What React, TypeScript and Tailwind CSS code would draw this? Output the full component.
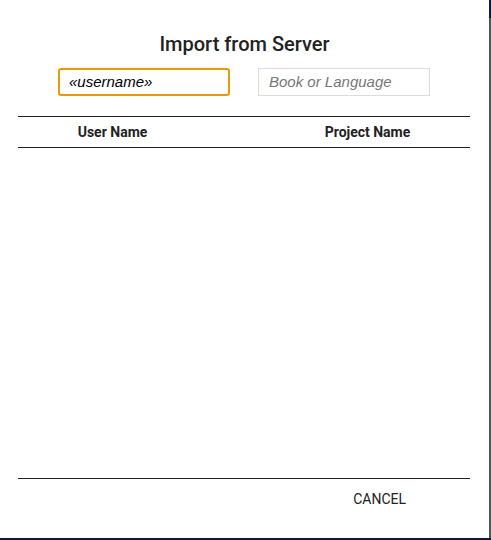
import React from "react";

export default function App() {
  return (
    <div className="w-[491px] h-[540px] bg-[#0d1b3a] flex flex-col" style={{ fontFamily: "Roboto, 'Noto Sans', sans-serif" }}>
      <div className="flex h-[538px]">
        <div className="w-[489px] h-[538px] bg-white flex flex-col">
          <h1 className="pt-[32px] text-center text-[20px] leading-[24px] font-medium text-[#222]">Import from Server</h1>
          <div className="mt-[12px] pl-[58px] flex gap-[28px]">
            <div className="w-[172px] h-[28px] rounded-[3px] border-2 border-[#e59a0c] flex items-center pl-[9px]">
              <span className="italic text-[15px] text-black" style={{ fontFamily: "'Liberation Sans', Arial, sans-serif" }}>«username»</span>
            </div>
            <div className="w-[172px] h-[28px] border border-[#dcdcdc] flex items-center pl-[10px]">
              <span className="italic text-[15px] text-[#777]" style={{ fontFamily: "'Liberation Sans', Arial, sans-serif" }}>Book or Language</span>
            </div>
          </div>
          <div className="mt-[20px] ml-[18px] w-[452px] flex-1 flex flex-col">
            <div className="h-[32px] border-t border-b border-[#222] flex items-center text-[14px] font-bold text-[#222]">
              <div className="w-[189px] text-center">User Name</div>
              <div className="ml-[58px] flex-1 text-center">Project Name</div>
            </div>
            <div className="flex-1" />
            <div className="border-t border-[#222] h-[60px] flex justify-end">
              <button className="mt-[10px] mr-[64px] h-[20px] text-[14px] text-[#222]">CANCEL</button>
            </div>
          </div>
        </div>
        <div className="w-[2px] flex flex-col">
          <div className="h-[18px] bg-[#0d1b3a]" />
          <div className="flex-1 bg-[#555]" />
        </div>
      </div>
    </div>
  );
}
